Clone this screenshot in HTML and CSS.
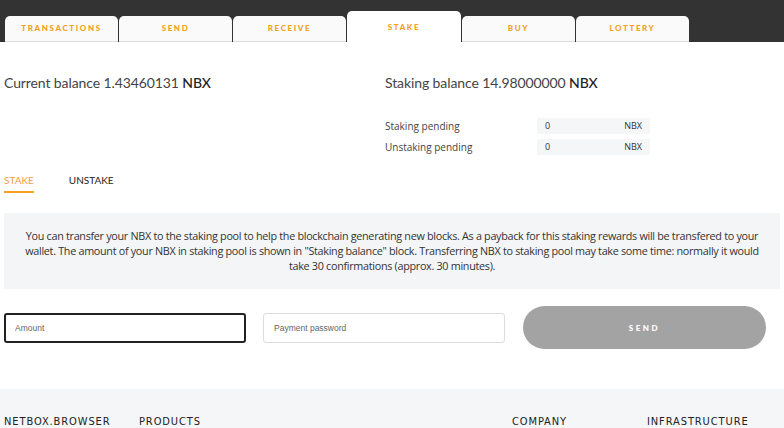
FILE: index.html
```html
<!DOCTYPE html>
<html lang="en">
<head>
<meta charset="UTF-8">
<meta name="viewport" content="width=device-width, initial-scale=1.0">
<link rel="stylesheet" href="styles.css">
<title>NetBox wallet: stake</title>
</head>
<body>
<div class="topbar">
  <nav class="tabs">
    <a class="tab">TRANSACTIONS</a>
    <a class="tab">SEND</a>
    <a class="tab">RECEIVE</a>
    <a class="tab active">STAKE</a>
    <a class="tab">BUY</a>
    <a class="tab">LOTTERY</a>
  </nav>
</div>

<main class="page">
  <div class="balances">
    <div class="balance">Current balance 1.43460131 <b>NBX</b></div>
    <div>
      <div class="balance">Staking balance 14.98000000 <b>NBX</b></div>
      <table class="pending">
        <tr><td class="label">Staking pending</td><td><span class="val"><span>0</span><span>NBX</span></span></td></tr>
        <tr><td class="label">Unstaking pending</td><td><span class="val"><span>0</span><span>NBX</span></span></td></tr>
      </table>
    </div>
  </div>

  <div class="subtabs">
    <a class="subtab active">STAKE</a>
    <a class="subtab">UNSTAKE</a>
  </div>

  <div class="info">
    You can transfer your NBX to the staking pool to help the blockchain generating new blocks. As a payback for this staking rewards will be transfered to your wallet. The amount of your NBX in staking pool is shown in "Staking balance" block. Transferring NBX to staking pool may take some time: normally it would take 30 confirmations (approx. 30 minutes).
  </div>

  <form class="stake-form">
    <input class="field focus" type="text" placeholder="Amount">
    <input class="field" type="password" placeholder="Payment password">
    <button class="send" type="button">SEND</button>
  </form>
</main>

<footer>
  <div class="cols">
    <div class="col">NETBOX.BROWSER</div>
    <div class="col">PRODUCTS</div>
  </div>
  <div class="cols">
    <div class="col">COMPANY</div>
    <div class="col">INFRASTRUCTURE</div>
  </div>
</footer>
</body>
</html>
```

FILE: styles.css
```css
body { margin: 0; font-family: Lato, "Open Sans", sans-serif; color: #444; background: #fff; }
a { cursor: pointer; }

.topbar { background-color: #333333; height: 42px; padding-left: 5px; display: flex; align-items: flex-end; }
.tabs { display: flex; gap: 1px; align-items: flex-end; }
.tab { width: 113px; height: 26px; background-color: #fafafa; border-bottom: 1px solid #dddddd; border-radius: 5px 5px 0 0; display: flex; align-items: center; justify-content: center; padding-bottom: 2px; box-sizing: border-box; font-size: 8px; font-weight: 900; letter-spacing: 1.6px; color: #f5a020; }
.tab.active { height: 31px; background-color: #ffffff; border-bottom: none; padding-bottom: 0; padding-top: 1px; width: 114px; }

.page { padding: 0 4px; }
.balances { display: grid; grid-template-columns: 381px 1fr; padding-top: 32px; }
.balance { font-size: 14px; line-height: 18px; color: #444; letter-spacing: -0.1px; }
.balance b { font-weight: 500; color: #222; }
.pending { border-collapse: collapse; margin-top: 23px; font-family: "Open Sans", sans-serif; font-size: 10px; color: #444; }
.pending td { padding: 0; height: 21px; }
.pending .label { width: 152px; }
.val { display: flex; justify-content: space-between; width: 113px; height: 16px; align-items: center; padding: 0 8px; box-sizing: border-box; background-color: #f5f6f8; font-size: 9px; color: #333; }

.subtabs { display: flex; gap: 35px; margin-top: 17px; font-size: 10px; }
.subtab { color: #222; padding-bottom: 5px; }
.subtab.active { color: #f0a040; border-bottom: 2px solid #f5a020; }

.info { margin-top: 20px; background-color: #f4f5f7; padding: 15px 18px 16px; text-align: center; font-family: "Open Sans", sans-serif; font-size: 10.8px; line-height: 15px; letter-spacing: -0.3px; color: #333; }

.stake-form { display: flex; align-items: center; margin-top: 17px; }
.field { width: 242px; height: 30px; box-sizing: border-box; border: 1px solid #dddddd; border-radius: 3px; padding: 0 10px; font-family: Arial, "Liberation Sans", sans-serif; font-size: 8.5px; margin-right: 17px; }
.field::placeholder { color: #666; }
.field.focus { border: 2px solid #222; padding-left: 9px; }
.send { width: 243px; height: 43px; margin-left: 1px; border: none; border-radius: 22px; background-color: #a3a3a3; color: #fff; font-family: Lato, sans-serif; font-size: 8px; font-weight: 900; letter-spacing: 2.5px; }

footer { margin-top: 40px; background-color: #f5f6f8; padding: 26px 2px 20px 4px; display: flex; justify-content: space-between; font-family: "DejaVu Sans Condensed", "Open Sans", sans-serif; font-size: 11px; letter-spacing: 0.9px; color: #222; }
.cols { display: flex; }
.col { width: 135px; }
```
